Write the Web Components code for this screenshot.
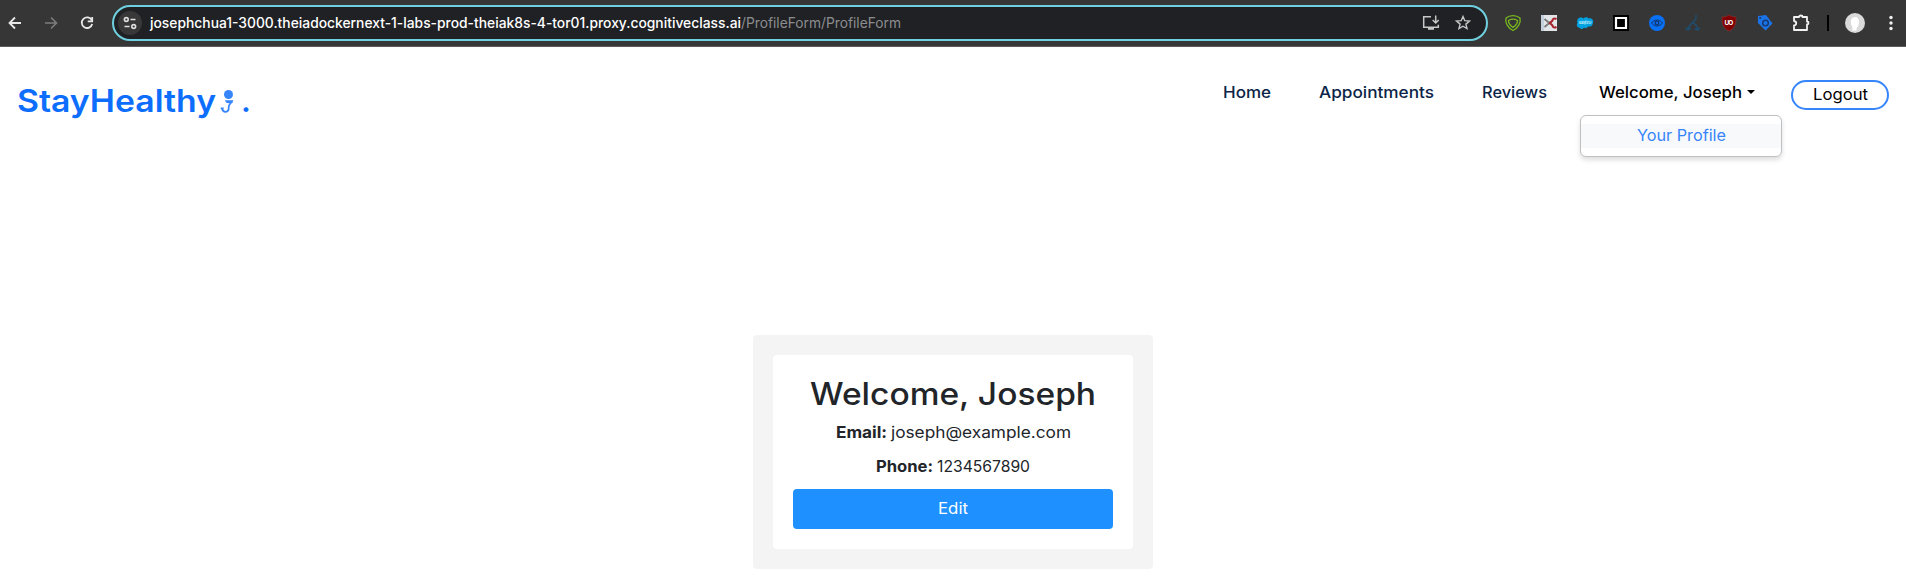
<!DOCTYPE html>
<html lang="en">
<head>
<meta charset="utf-8">
<title>StayHealthy</title>
<style>
html,body{margin:0;height:100%;background:#fff;overflow:hidden}
body{font-family:Inter,"Open Sans",sans-serif;font-size:16px;color:#212529}
</style>
</head>
<body>
<browser-bar></browser-bar>
<site-nav></site-nav>
<profile-card></profile-card>
<script>
// Inline text set to a fixed measure by widening or narrowing its glyphs.
class TextRun extends HTMLElement {
  connectedCallback() {
    if (!this.shadowRoot) {
      this.attachShadow({mode:'open'}).innerHTML = `<style>:host{display:inline-block;white-space:nowrap;text-align:left}span{display:inline-block;transform-origin:0 50%}</style><span><slot></slot></span>`;
    }
    const w = parseFloat(this.getAttribute('w'));
    const span = this.shadowRoot.querySelector('span');
    const natural = span.getBoundingClientRect().width;
    this.style.width = w + 'px';
    span.style.transform = `scaleX(${(w / natural).toFixed(4)})`;
  }
}
customElements.define('text-run', TextRun);

class BrowserBar extends HTMLElement {
  constructor() {
    super();
    this.attachShadow({mode:'open'}).innerHTML = `
<style>
:host{display:flex;box-sizing:border-box;height:47px;padding:0 3px 0 3px;align-items:flex-start;background:#363636;border-bottom:1px solid #5c5c5c;font-size:14px}
svg{display:block;flex:none;fill:none;overflow:visible}
.nav{display:flex;gap:12px;padding-top:11px;width:109px;flex:none}
.address{display:flex;align-items:center;box-sizing:border-box;width:1376px;height:36px;margin-top:5px;padding:0 11px 0 4px;border:2px solid #6fd0df;border-radius:18px;background:#202125;color:#fff;flex:none}
.chip{width:24px;height:24px;border-radius:50%;background:#383838;margin-right:8px;flex:none}
.url{flex:1;white-space:nowrap;font-weight:500;display:flex;padding-bottom:1px}
.path{color:#8c8d8f;font-weight:400}
.actions{display:flex;gap:8px}
.ext{display:flex;gap:12px;padding:11px 0 0 13px}
.end{display:flex;align-items:center;padding-top:11px;margin-left:14px}
.sep{width:2px;height:16px;background:#000}
.end svg:first-of-type{margin-left:14px}
.end svg:last-of-type{margin-left:12px}
</style>
<div class="nav">
 <svg width="24" height="24" stroke="#e8e8e8" stroke-width="1.8"><path d="M18 12H7M12 6.500 6.500 12l5.500 5.500"/></svg>
 <svg width="24" height="24" stroke="#7c7c7c" stroke-width="1.700"><path d="M6 12h11M12 6.500 17.500 12 12 17.500"/></svg>
 <svg width="24" height="24" stroke="#e8e8e8" stroke-width="1.800"><path d="M16.800 9.300A5.300 5.300 0 1 0 17.200 13"/><path d="M17.200 6v4.300h-4.500"/></svg>
</div>
<div class="address">
 <svg class="chip" viewBox="0 0 24 24" stroke="#dedede" stroke-width="1.600"><circle cx="8.300" cy="8.500" r="1.900"/><path d="M12.500 8.500h5M6.500 15.500h5"/><circle cx="15.700" cy="15.500" r="1.900"/></svg>
 <div class="url"><text-run w="591">josephchua1-3000.theiadockernext-1-labs-prod-theiak8s-4-tor01.proxy.cognitiveclass.ai</text-run><text-run class="path" w="160">/ProfileForm/ProfileForm</text-run></div>
 <div class="actions">
  <svg width="24" height="24" stroke="#c7c7c7" stroke-width="1.500"><path d="M12 5.700H4.700v10.500h14.600v-2.500M16.700 4.500v7M13.700 9l3 3 3-3"/><path d="M9 17.800h6" stroke-width="2"/></svg>
  <svg width="24" height="24" stroke="#c7c7c7" stroke-width="1.400"><path d="m12 5.500 1.800 4.200 4.700.4-3.600 3 1.100 4.500-4-2.400-4 2.400 1.100-4.500-3.600-3 4.700-.4z"/></svg>
 </div>
</div>
<div class="ext">
 <svg width="24" height="24" stroke="#78b81e" stroke-width="1.300"><path d="M5 7C9 3.800 15 3.800 19 7c1.200 5-2.500 10.500-7 12.500C7.500 17.500 3.800 12 5 7z"/><path d="M7.500 9.500c3-1.800 6-1.800 9 0 .2 2.500-2 5.200-4.500 7-2.500-1.800-4.700-4.500-4.500-7z"/></svg>
 <svg width="24" height="24"><path d="M4 4h16v16H4z" fill="#e3e6e8"/><path d="M4 4h3v16H4z" fill="#c3d0dc"/><path d="m7.500 8 6 5M7.500 16l6-5" stroke="#777" stroke-width="1.800"/><path d="M19.500 8c-2-1-4-.5-4 1.500L13 12l2.500 2.500c0 2 2 2.500 4 1.500" stroke="#a82029" stroke-width="2"/></svg>
 <svg width="24" height="24"><path d="M7 17c-3-.5-4-3-2.500-5C3.500 9 5 6.500 8 6.500c1 0 2 .5 2.500 1 2-2 4-1.500 5 0 3-1 5.500 1.500 4.500 4.500-.5 3-2.500 4-5 3.500-1 2-3 2-4 1-1.500 2-3.500 2-4 .5z" fill="#00a1e0"/><text x="5.500" y="13" font-size="4" font-style="italic" fill="#dff4fd" textLength="13">salesforce</text></svg>
 <svg width="24" height="24"><path d="M4 4h16v16H4z" fill="#000"/><path d="M7 7h10v10H7z" stroke="#fff" stroke-width="2.200"/></svg>
 <svg width="24" height="24"><circle cx="12" cy="12" r="8" fill="#0870f5"/><path d="M6.500 12c3-4 8-4 11 0-3 4-8 4-11 0z" stroke="#12356d"/><circle cx="12" cy="12" r="1.800" stroke="#12356d" stroke-width="1.300"/></svg>
 <svg width="24" height="24" stroke="#1f4d6e" stroke-width="1.500"><path d="M15 4v3c0 3-7 6-8 11M12 12c3 1 4 3 4.500 6M4.500 16.500 7 19l3-2M13.500 17.500l3 1.500 2.500-2.500"/></svg>
 <svg width="24" height="24"><path d="M12 4c2 1.500 4.500 2 7 2 0 7-1 11-7 14C6 17 5 13 5 6c2.500 0 5-.5 7-2z" fill="#800000" stroke="#a33" stroke-width=".5"/><text x="7.600" y="14" font-size="6.500" font-weight="700" fill="#fff" textLength="8.600">UO</text></svg>
 <svg width="24" height="24"><path d="m5 5 8-1 6.500 8.500-7 7L5 12z" fill="#1a73e8"/><circle cx="12.500" cy="12" r="2.800" stroke="#173a70" stroke-width="1.500"/><circle cx="7.200" cy="7" r="1" fill="#173a70"/></svg>
 <svg width="24" height="24" stroke="#f2f2f2" stroke-width="1.800" stroke-linejoin="round"><path d="M5 6h5c0-2 3.500-2 3.500 0H18v4.500c2 0 2 3 0 3V19H5v-4.500c3-.5 3-4 0-4.500z"/></svg>
</div>
<div class="end"><div class="sep"></div>
 <svg width="24" height="24"><circle cx="12" cy="12" r="10" fill="#dadada"/><path d="M9 19.500c1-2 .5-3-.5-5C6.500 9 9 6 12 6s5 3 3.500 8c-.5 2-2 2-2 5.500z" fill="#fff"/></svg>
 <svg width="24" height="24"><g fill="#f0f0f0"><circle cx="12" cy="6.500" r="1.700"/><circle cx="12" cy="12" r="1.700"/><circle cx="12" cy="17.500" r="1.700"/></g></svg>
</div>`;
  }
}
customElements.define('browser-bar', BrowserBar);

class SiteNav extends HTMLElement {
  constructor() {
    super();
    this.attachShadow({mode:'open'}).innerHTML = `
<style>
:host{display:flex;justify-content:space-between;align-items:flex-start;box-sizing:border-box;height:108px;padding:33px 17px 0 17px}
.logo{display:flex;color:#0d6efd;font-size:31px;line-height:40px;font-weight:600;padding-top:1px}
.logo svg{margin:9px 6px 0 4px}
nav{display:flex;font-weight:500;line-height:24px;color:#0b2447}
.home{margin-right:48px}.app{margin-right:48px}.rev{margin-right:52px}
.user{position:relative;width:192px;color:#000}
.toggle{display:flex;align-items:center;gap:5px}
i{border:4px solid transparent;border-top-color:#000;border-bottom:0;width:0;height:0}
.menu{position:absolute;left:-19px;top:35px;width:200px;height:24px;padding:8px 0;border:1px solid #c0c0c0;border-radius:6px;box-shadow:0 3px 5px #0002;background:#fff}
.item{background:#f8f9fa;color:#3685fb;text-align:center;font-weight:400;line-height:23px;height:24px}
.out{box-sizing:border-box;width:98px;height:30px;border:2px solid #3685fb;border-radius:15px;color:#000;font-weight:400;text-align:center;line-height:25px}
</style>
<div class="logo"><text-run w="199">StayHealthy</text-run>
<svg width="15" height="26" fill="#3685fb"><circle cx="8.500" cy="4.500" r="4.500"/><path d="M5 10.300h8.500c-1 2.300-3 3-5 3-2 0-3-1.300-3.500-3z"/><path d="M12.500 11.500C9 14 8.500 15.500 8.700 18c.2 4.500-5.500 5.500-6.700.5M.7 18.300h3" fill="none" stroke="#3685fb" stroke-width="1.700"/></svg><span>.</span></div>
<nav><text-run class="home" w="48">Home</text-run><text-run class="app" w="115">Appointments</text-run><text-run class="rev" w="65">Reviews</text-run>
<div class="user"><div class="toggle"><text-run w="143">Welcome, Joseph</text-run><i></i></div><div class="menu"><div class="item"><text-run w="89">Your Profile</text-run></div></div></div>
<div class="out"><text-run w="55">Logout</text-run></div></nav>`;
  }
}
customElements.define('site-nav', SiteNav);

class ProfileCard extends HTMLElement {
  constructor() {
    super();
    this.attachShadow({mode:'open'}).innerHTML = `
<style>
:host{display:block;box-sizing:border-box;width:400px;height:234px;margin:180px auto 0;padding:20px;background:#f4f4f4;border-radius:4px}
.in{box-sizing:border-box;height:194px;padding:20px;background:#fff;border-radius:4px;text-align:center}
h1{margin:0 0 7px;font-size:31px;line-height:38px;font-weight:500}
p{margin:0 0 10px;line-height:24px;height:24px;display:flex;justify-content:center;gap:4px}
b{font-weight:700}
button{display:block;width:320px;height:40px;margin-top:11px;border:0;border-radius:4px;background:#1e90ff;color:#fff;font:inherit;line-height:38px;padding:0 0 2px}
</style>
<div class="in"><h1><text-run w="286">Welcome, Joseph</text-run></h1>
<p><b><text-run w="51">Email:</text-run></b><text-run w="180">joseph@example.com</text-run></p>
<p><b><text-run w="57">Phone:</text-run></b><text-run w="93">1234567890</text-run></p>
<button><text-run w="30">Edit</text-run></button></div>`;
  }
}
customElements.define('profile-card', ProfileCard);
</script>
</body>
</html>
